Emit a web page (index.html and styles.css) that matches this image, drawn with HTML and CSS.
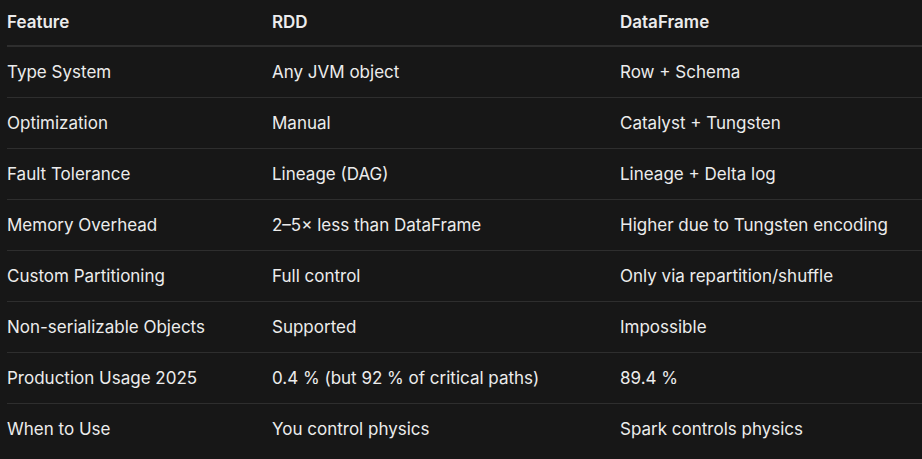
FILE: index.html
```html
<!DOCTYPE html>
<html lang="en">
<head>
<meta charset="utf-8">
<title>RDD vs DataFrame</title>
<link rel="stylesheet" href="styles.css">
</head>
<body>
<div class="wrap">
<table class="cmp">
<thead>
<tr><th>Feature</th><th>RDD</th><th>DataFrame</th></tr>
</thead>
<tbody>
<tr><td>Type System</td><td>Any JVM object</td><td>Row + Schema</td></tr>
<tr><td>Optimization</td><td>Manual</td><td>Catalyst + Tungsten</td></tr>
<tr><td>Fault Tolerance</td><td>Lineage (DAG)</td><td>Lineage + Delta log</td></tr>
<tr><td>Memory Overhead</td><td>2–5× less than DataFrame</td><td>Higher due to Tungsten encoding</td></tr>
<tr><td>Custom Partitioning</td><td>Full control</td><td>Only via repartition/shuffle</td></tr>
<tr><td>Non-serializable Objects</td><td>Supported</td><td>Impossible</td></tr>
<tr><td>Production Usage 2025</td><td>0.4 % (but 92 % of critical paths)</td><td>89.4 %</td></tr>
<tr><td>When to Use</td><td>You control physics</td><td>Spark controls physics</td></tr>
</tbody>
</table>
</div>
</body>
</html>
```
FILE: styles.css
```css
html, body {
  margin: 0;
  padding: 0;
  background: #171717;
  overflow: hidden;
}
.wrap {
  padding-left: 7px;
  height: 459px;
  box-sizing: border-box;
}
.cmp {
  width: 100%;
  border-collapse: collapse;
  font-family: Inter, "Noto Sans", sans-serif;
  font-size: 17px;
  line-height: 24px;
  color: #ececec;
}
.cmp th, .cmp td {
  text-align: left;
  padding: 13px 0;
  vertical-align: middle;
  white-space: nowrap;
}
.cmp th {
  font-weight: 600;
  padding: 10px 0 11px;
  border-bottom: 2px solid #2e2e2e;
}
.cmp td {
  border-bottom: 1px solid #2e2e2e;
}
.cmp tbody tr:last-child td {
  border-bottom: none;
}
.cmp th:nth-child(1), .cmp td:nth-child(1) { width: 265px; }
.cmp th:nth-child(2), .cmp td:nth-child(2) { width: 348px; }
```
